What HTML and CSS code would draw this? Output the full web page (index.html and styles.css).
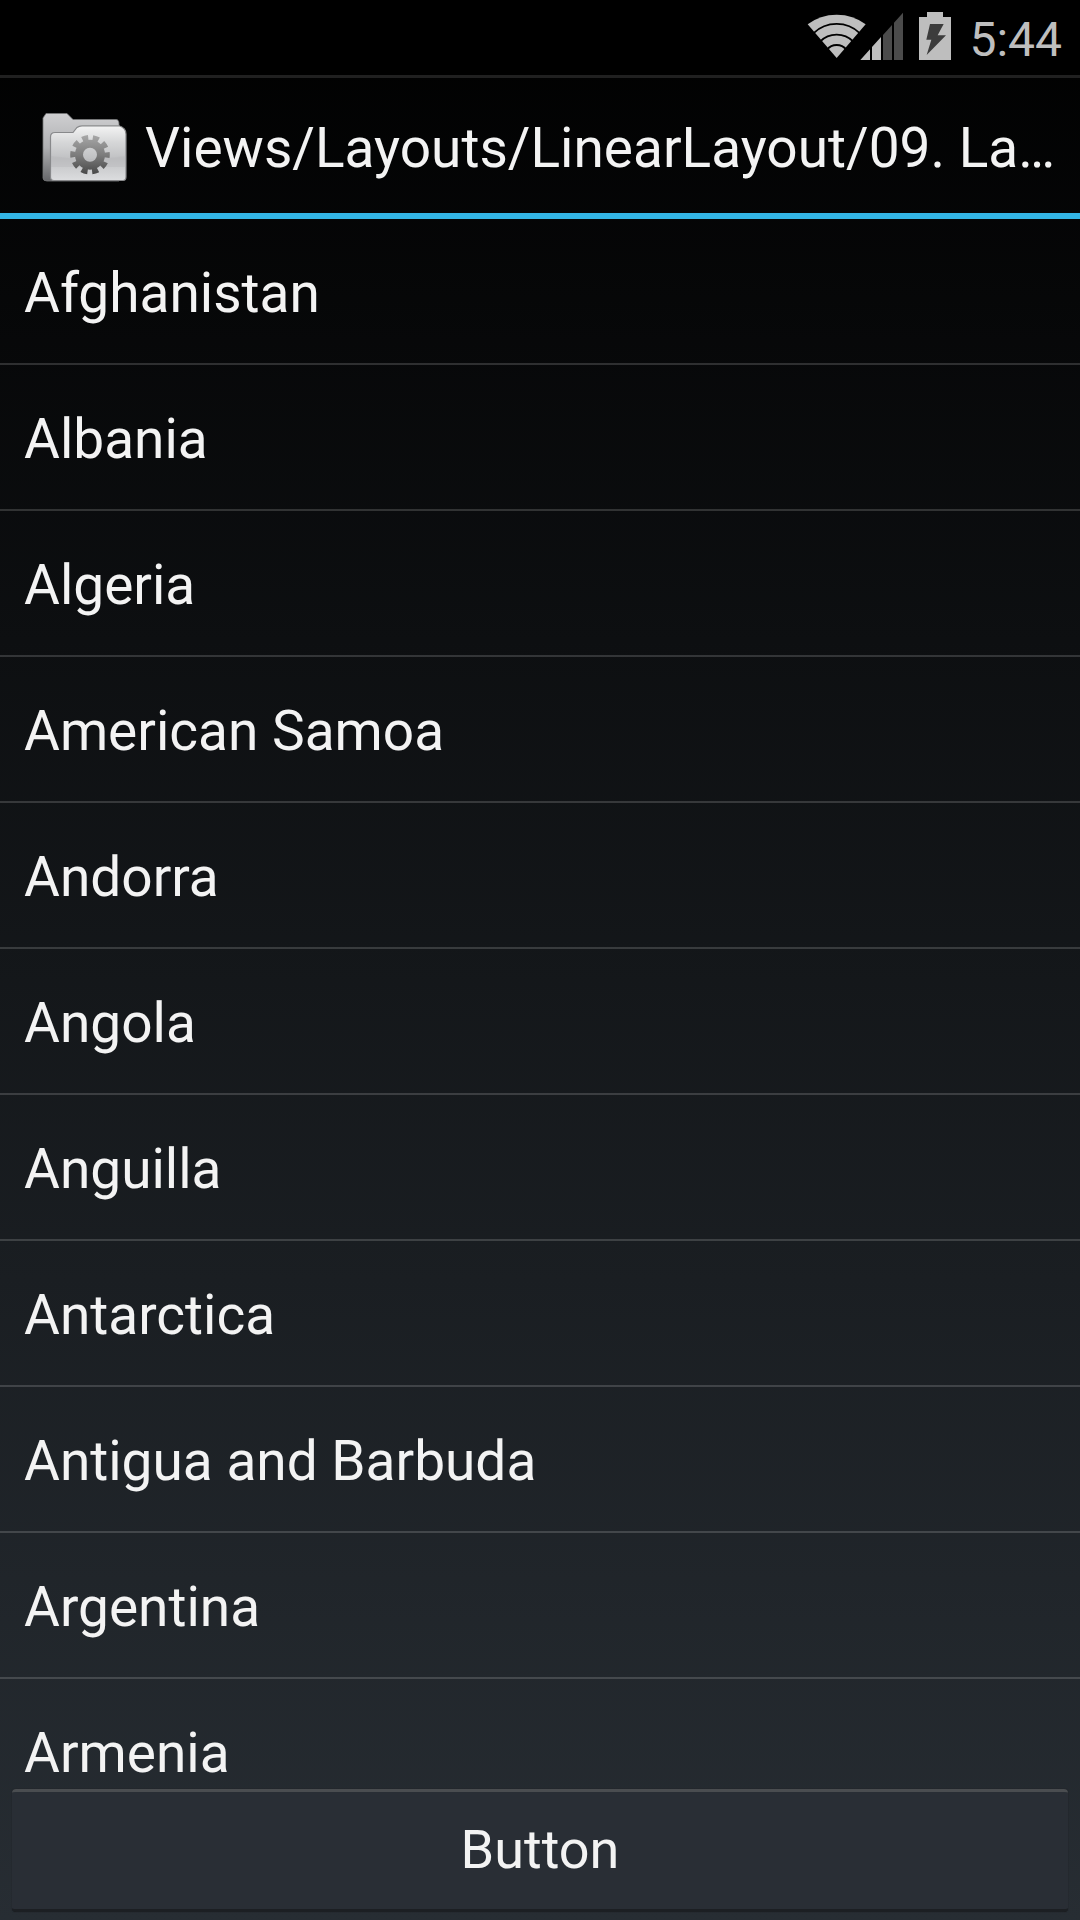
FILE: index.html
```html
<!DOCTYPE html>
<html lang="en">

<head>
  <meta charset="UTF-8">
  <meta name="viewport" content="width=device-width, initial-scale=1.0">
  <title>Views/Layouts/LinearLayout</title>
  <link rel="stylesheet" href="styles.css">
</head>

<body>
  <div class="status-bar">
    <svg class="network" viewBox="51 36 288 144" aria-hidden="true">
      <path fill="#bebebe" d="M140 174 L53 73 Q90 44 140 44 Q190 44 227 73 Z"/>
      <g fill="none" stroke="#000" stroke-width="5.5">
        <path d="M70 100 A101 101 0 0 1 210 100"/>
        <path d="M90 125 A70 70 0 0 1 190 125"/>
        <path d="M111 149 A37 37 0 0 1 169 149"/>
      </g>
      <path fill="#bebebe" d="M211 180 L240 148 V180 Z M246 141 L273 111 V180 H246 Z"/>
      <path fill="#4b4b4b" d="M279 105 L306 75 V180 H279 Z M312 68 L339 38 V180 H312 Z"/>
    </svg>
    <svg class="battery" viewBox="387 36 96 144" aria-hidden="true">
      <path fill="#bebebe" d="M411 36 H459 V51 H483 V180 H387 V51 H411 Z"/>
      <path fill="#3c3c3c" d="M420 72 H461 L443 106 H468 L410 165 L424 119 H409 Z"/>
    </svg>
    <span class="clock">5:44</span>
  </div>

  <header class="action-bar">
    <svg class="app-icon" viewBox="0 0 96 96" aria-hidden="true">
      <defs>
        <linearGradient id="back" x1="0" y1="0" x2="0" y2="1">
          <stop offset="0" stop-color="#cfcfd1"/>
          <stop offset="0.5" stop-color="#b0b1b3"/>
          <stop offset="1" stop-color="#66676a"/>
        </linearGradient>
        <linearGradient id="front" x1="0" y1="0" x2="0" y2="1">
          <stop offset="0" stop-color="#f4f4f4"/>
          <stop offset="0.3" stop-color="#d6d7d8"/>
          <stop offset="0.6" stop-color="#c0c1c3"/>
          <stop offset="1" stop-color="#dcdddf"/>
        </linearGradient>
        <linearGradient id="gear" gradientUnits="userSpaceOnUse" x1="0" y1="36" x2="0" y2="76">
          <stop offset="0" stop-color="#a8a8a8"/>
          <stop offset="0.5" stop-color="#7c7c7c"/>
          <stop offset="1" stop-color="#464646"/>
        </linearGradient>
      </defs>
      <path fill="url(#back)" stroke="#77787a" stroke-width="0.8" d="M7 19 L10 14.5 H31 L37 20.5 H80 Q83 20.5 83 25 V82 H11 Q7 82 7 79 Z"/>
      <path fill="url(#front)" stroke="#88898b" stroke-width="1.2" d="M14.5 38 Q14.5 33.5 19 33.5 H37 L41 28.5 Q43 26.8 46 26.8 H83 Q90 29 90 35 V78 Q90 81.5 87 81.5 H18 Q14.5 81.5 14.5 78 Z"/>
      <path fill="#b4b5b7" opacity="0.35" d="M15 57 Q54 63 89.5 57 V68 H15 Z"/>
      <g fill="none" stroke="url(#gear)">
        <circle cx="54" cy="55.7" r="11" stroke-width="8"/>
        <circle cx="54" cy="55.7" r="17" stroke-width="5.6" stroke-dasharray="6 4.681" stroke-dashoffset="3"/>
      </g>
    </svg>
    <h1>Views/Layouts/LinearLayout/09. La…</h1>
  </header>

  <ul class="country-list">
    <li>Afghanistan</li>
    <li>Albania</li>
    <li>Algeria</li>
    <li>American Samoa</li>
    <li>Andorra</li>
    <li>Angola</li>
    <li>Anguilla</li>
    <li>Antarctica</li>
    <li>Antigua and Barbuda</li>
    <li>Argentina</li>
    <li>Armenia</li>
  </ul>

  <div class="footer">
    <button type="button">Button</button>
  </div>
</body>

</html>
```

FILE: styles.css
```css
* {
  box-sizing: border-box;
}

body {
  display: flex;
  flex-direction: column;
  height: 100vh;
  margin: 0;
  font-family: Roboto, sans-serif;
  font-size: 55px;
  color: #f3f3f3;
  background: linear-gradient(#000000, #272d33);
}

.status-bar {
  display: flex;
  flex: none;
  align-items: center;
  justify-content: flex-end;
  gap: 16px;
  height: 75px;
  padding-right: 18px;
  background: #000;
}

.network,
.battery {
  height: 48px;
  margin-bottom: 3px;
}

.network {
  width: 96px;
}

.battery {
  width: 32px;
}

.clock {
  margin: 3px 0 0 2px;
  font-size: 48px;
  color: #bebebe;
}

.action-bar {
  display: flex;
  flex: none;
  align-items: center;
  gap: 13px;
  height: 144px;
  padding: 3px 24px 0 36px;
  border-top: 3px solid #202020;
  border-bottom: 6px solid #33b5e5;
}

.app-icon {
  flex: none;
  width: 96px;
  height: 96px;
}

h1 {
  margin: 2px 0 0;
  overflow: hidden;
  font-size: 55px;
  font-weight: normal;
  text-overflow: ellipsis;
  white-space: nowrap;
}

.country-list {
  flex: 1;
  min-height: 0;
  margin: 0;
  padding: 0;
  overflow: hidden;
  list-style: none;
}

.country-list li {
  height: 146px;
  padding: 4px 24px 0;
  line-height: 140px;
  border-bottom: 2px solid rgba(255, 255, 255, 0.16);
}

.footer {
  flex: none;
  padding: 13px 12px 8px;
}

button {
  display: block;
  width: 100%;
  height: 123px;
  padding: 0 0 2px;
  font-family: inherit;
  font-size: 54px;
  color: #f3f3f3;
  background: #292e35;
  border: 0 solid;
  border-top: 3px solid #4a4d50;
  border-bottom: 3px solid #1c1f23;
  border-radius: 4px;
  box-shadow: 0 0 1px #15181b;
}
```
